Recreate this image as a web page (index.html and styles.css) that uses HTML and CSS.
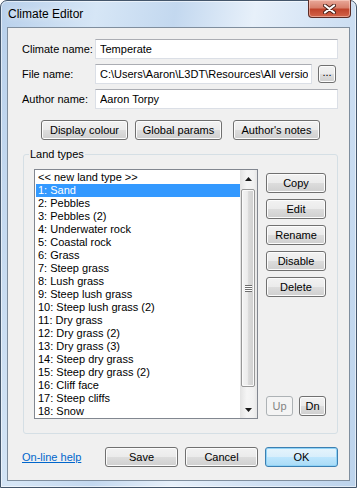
FILE: index.html
```html
<!DOCTYPE html>
<html lang="en">
<head>
    <meta charset="UTF-8">
    <title>Climate Editor</title>
    <link rel="stylesheet" href="styles.css">
</head>
<body>
    <div class="window">
        <div class="titlebar">
            <div class="title">Climate Editor</div>
            <div class="close-button">
                <svg width="13" height="10" viewBox="0 0 13 10">
                    <path d="M2 1.5 L11 8.5 M11 1.5 L2 8.5" stroke="#4a2018" stroke-width="4" stroke-linecap="round"/>
                    <path d="M2 1.5 L11 8.5 M11 1.5 L2 8.5" stroke="#ffffff" stroke-width="2.2" stroke-linecap="round"/>
                </svg>
            </div>
        </div>

        <div class="client">
            <div class="fields">
                <label>Climate name:</label>
                <input type="text" value="Temperate">
                <label>File name:</label>
                <div class="file-row">
                    <input type="text" value="C:\Users\Aaron\L3DT\Resources\All version">
                    <button class="btn browse-button">...</button>
                </div>
                <label>Author name:</label>
                <input type="text" value="Aaron Torpy">
            </div>

            <div class="top-buttons">
                <button class="btn top-button">Display colour</button>
                <button class="btn top-button">Global params</button>
                <button class="btn top-button notes-button">Author's notes</button>
            </div>

            <fieldset class="group">
                <legend>Land types</legend>
                <div class="group-body">
                    <div class="listbox">
                        <div class="list-items">
                            <div class="item">&lt;&lt; new land type &gt;&gt;</div>
                            <div class="item selected">1: Sand</div>
                            <div class="item">2: Pebbles</div>
                            <div class="item">3: Pebbles (2)</div>
                            <div class="item">4: Underwater rock</div>
                            <div class="item">5: Coastal rock</div>
                            <div class="item">6: Grass</div>
                            <div class="item">7: Steep grass</div>
                            <div class="item">8: Lush grass</div>
                            <div class="item">9: Steep lush grass</div>
                            <div class="item">10: Steep lush grass (2)</div>
                            <div class="item">11: Dry grass</div>
                            <div class="item">12: Dry grass (2)</div>
                            <div class="item">13: Dry grass (3)</div>
                            <div class="item">14: Steep dry grass</div>
                            <div class="item">15: Steep dry grass (2)</div>
                            <div class="item">16: Cliff face</div>
                            <div class="item">17: Steep cliffs</div>
                            <div class="item">18: Snow</div>
                        </div>
                        <div class="scrollbar">
                            <div class="arrow">
                                <svg width="7" height="4" viewBox="0 0 7 4"><polygon points="3.5,0 7,4 0,4" fill="#1a1a1a"/></svg>
                            </div>
                            <div class="track">
                                <div class="thumb"><div class="grip"></div></div>
                            </div>
                            <div class="arrow">
                                <svg width="7" height="4" viewBox="0 0 7 4"><polygon points="0,0 7,0 3.5,4" fill="#1a1a1a"/></svg>
                            </div>
                        </div>
                    </div>

                    <div class="side-buttons">
                        <button class="btn side-button">Copy</button>
                        <button class="btn side-button">Edit</button>
                        <button class="btn side-button">Rename</button>
                        <button class="btn side-button">Disable</button>
                        <button class="btn side-button">Delete</button>
                        <div class="move-buttons">
                            <button class="btn move-button" disabled>Up</button>
                            <button class="btn move-button">Dn</button>
                        </div>
                    </div>
                </div>
            </fieldset>

            <div class="footer">
                <a href="#" class="help-link">On-line help</a>
                <button class="btn footer-button save-button">Save</button>
                <button class="btn footer-button">Cancel</button>
                <button class="btn footer-button default-button">OK</button>
            </div>
        </div>
    </div>
</body>
</html>
```

FILE: styles.css
```css
* {
    margin: 0;
    padding: 0;
    box-sizing: border-box;
}

body {
    width: 357px;
    height: 488px;
    overflow: hidden;
    background: #ffffff;
    font-family: "Liberation Sans", Arial, sans-serif;
    font-size: 11px;
    color: #000;
}

.window {
    width: 357px;
    height: 488px;
    border: 1px solid #44566b;
    border-radius: 7px 7px 0 0;
    background: linear-gradient(100deg, #b8d0eb 0%, #d6e6f6 22%, #c3d8ef 40%, #e7f0fa 58%, #cfe0f3 78%, #bcd3ec 100%);
    box-shadow: inset 0 0 0 1px rgba(255, 255, 255, 0.55);
    display: flex;
    flex-direction: column;
}

.titlebar {
    height: 26px;
    display: flex;
    align-items: flex-start;
    padding-left: 7px;
}

.title {
    font-size: 12px;
    line-height: 26px;
    text-shadow: 0 0 6px rgba(255, 255, 255, 0.9);
}

.close-button {
    margin-left: auto;
    margin-right: 5px;
    margin-top: -1px;
    width: 43px;
    height: 18px;
    border: 1px solid #5b2b25;
    border-top: none;
    border-radius: 0 0 4px 4px;
    background: linear-gradient(#e9a99a 0%, #d8806c 45%, #c0442c 55%, #d3644a 100%);
    box-shadow: inset 0 0 0 1px rgba(255, 220, 210, 0.5);
    display: flex;
    justify-content: center;
    align-items: center;
}

.client {
    margin: 0 6px 6px 6px;
    height: 454px;
    border: 1px solid #7f8e9e;
    background: #f0f0f0;
    padding: 11px 11px 0 14px;
}

.fields {
    display: grid;
    grid-template-columns: 73px 243px;
    row-gap: 5px;
    align-items: center;
}

.fields input {
    height: 20px;
    border: 1px solid #dbdfe6;
    border-top-color: #abadb3;
    background: #fff;
    padding: 0 3px 0 4px;
    font-family: inherit;
    font-size: 11px;
    color: #000;
    outline: none;
}

.file-row {
    display: flex;
    align-items: center;
}

.file-row input {
    width: 217px;
}

.btn {
    height: 20px;
    border: 1px solid #707070;
    border-radius: 3px;
    background: linear-gradient(#f2f2f2 0%, #ebebeb 50%, #dddddd 50%, #cfcfcf 100%);
    box-shadow: inset 0 0 0 1px #fcfcfc;
    font-family: inherit;
    font-size: 11px;
    color: #000;
    cursor: pointer;
}

.btn:disabled {
    border-color: #adb2b5;
    background: #f4f4f4;
    color: #838383;
    box-shadow: none;
}

.browse-button {
    width: 18px;
    height: 18px;
    margin-left: 6px;
    line-height: 12px;
    padding-bottom: 4px;
}

.top-buttons {
    display: flex;
    gap: 7px;
    margin-top: 11px;
    padding-left: 19px;
}

.top-button {
    width: 87px;
}

.notes-button {
    margin-left: 4px;
}

.group {
    margin: 7px 0 0 1px;
    border: 1px solid #d5dfe5;
    border-radius: 3px;
    padding: 0 0 14px 5px;
}

.group legend {
    padding: 0 1px;
    line-height: 14px;
}

.group-body {
    display: flex;
    margin: 8px 0 0 5px;
}

.listbox {
    width: 224px;
    height: 250px;
    border: 1px solid #828790;
    background: #fff;
    display: flex;
}

.list-items {
    flex: 1;
    padding-top: 1px;
}

.item {
    height: 13px;
    line-height: 13px;
    margin-left: 1px;
    padding-left: 2px;
    white-space: nowrap;
}

.item.selected {
    background: #3399ff;
    color: #fff;
}

.scrollbar {
    width: 17px;
    display: flex;
    flex-direction: column;
    background: linear-gradient(to right, #e3e3e3, #f5f5f5 40%, #f1f1f1 80%, #e6e6e6);
}

.arrow {
    height: 17px;
    display: flex;
    justify-content: center;
    align-items: center;
}

.track {
    flex: 1;
    padding-top: 2px;
}

.thumb {
    height: 198px;
    margin: 0 2px 0 1px;
    border: 1px solid #979797;
    border-radius: 2px;
    background: linear-gradient(to right, #f4f4f4 0%, #ececec 45%, #dadada 55%, #cfcfcf 100%);
    box-shadow: inset 0 0 0 1px #fafafa;
    display: flex;
    justify-content: center;
    align-items: center;
}

.grip {
    width: 7px;
    height: 7px;
    background: repeating-linear-gradient(#6e6e6e 0 1px, #ffffff 1px 2px);
}

.side-buttons {
    width: 60px;
    margin-left: 8px;
    padding-top: 4px;
    display: flex;
    flex-direction: column;
    gap: 6px;
}

.side-button {
    width: 60px;
}

.move-buttons {
    margin-top: auto;
    margin-bottom: 3px;
    display: flex;
    gap: 6px;
}

.move-button {
    width: 27px;
}

.footer {
    display: flex;
    align-items: center;
    gap: 7px;
    margin-top: 13px;
}

.help-link {
    color: #0066cc;
    text-decoration: underline;
}

.footer-button {
    width: 73px;
}

.save-button {
    margin-left: auto;
}

.default-button {
    border-color: #3c7fb1;
    background: linear-gradient(#e5f4fc 0%, #d8eefb 50%, #bee6fd 50%, #a9dbf6 100%);
    box-shadow: inset 0 0 0 1px #8fd3f7;
}
```
